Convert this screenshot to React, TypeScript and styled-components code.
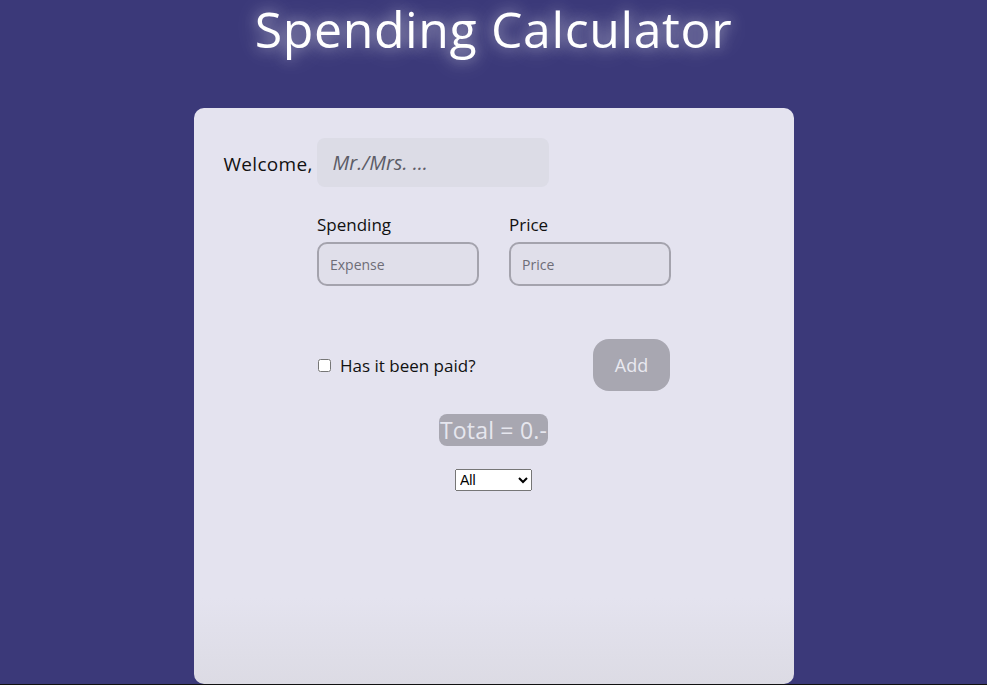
import React from "react";
import styled, { createGlobalStyle } from "styled-components";

const GlobalStyle = createGlobalStyle`
  html, body {
    margin: 0;
    padding: 0;
    background: #3b3979;
    font-family: "Open Sans", "Liberation Sans", sans-serif;
  }
  body {
    height: 685px;
    overflow: hidden;
    border-bottom: 1px solid #111;
    box-sizing: border-box;
  }
`;

const Title = styled.h1`
  margin: 0;
  height: 108px;
  text-align: center;
  color: #fff;
  font-size: 50px;
  font-weight: 500;
  letter-spacing: 0.6px;
  line-height: 58px;
  text-shadow: 0 0 14px rgba(255, 255, 255, 0.55), 0 0 28px rgba(255, 255, 255, 0.3);
`;

const Card = styled.main`
  width: 600px;
  height: 576px;
  margin: 0 auto;
  box-sizing: border-box;
  padding: 30px 30px 0;
  background: linear-gradient(#e4e3ef 85%, #dcdbe4);
  border-radius: 10px;
  display: flex;
  flex-direction: column;
  align-items: center;
`;

const WelcomeRow = styled.div`
  align-self: stretch;
  display: flex;
  align-items: center;
`;

const WelcomeLabel = styled.span`
  width: 93px;
  font-size: 19px;
  letter-spacing: 0.3px;
  color: #111;
  margin-top: 2px;
`;

const NameInput = styled.input`
  width: 232px;
  height: 49px;
  box-sizing: border-box;
  border: none;
  border-radius: 8px;
  background: #dcdce6;
  padding: 0 16px;
  font-family: inherit;
  font-size: 20px;
  font-style: italic;
  color: #555;
  &::placeholder {
    color: #5d5c66;
  }
`;

const Fields = styled.div`
  width: 353px;
  margin-top: 26px;
  display: grid;
  grid-template-columns: 162px 162px;
  column-gap: 30px;
`;

const Field = styled.label`
  display: flex;
  flex-direction: column;
  gap: 6px;
  font-size: 17px;
  color: #111;
`;

const TextInput = styled.input`
  width: 162px;
  height: 44px;
  box-sizing: border-box;
  border: 2px solid #a4a3ad;
  border-radius: 10px;
  background: #e0dfea;
  padding: 0 11px;
  font-family: inherit;
  font-size: 14px;
  &::placeholder {
    color: #6e6d77;
  }
`;

const ActionRow = styled.div`
  width: 353px;
  margin-top: 53px;
  display: flex;
  align-items: center;
  justify-content: space-between;
`;

const Paid = styled.label`
  display: flex;
  align-items: center;
  gap: 9px;
  font-size: 17px;
  color: #111;
`;

const Check = styled.input`
  width: 13px;
  height: 13px;
  margin: 0 0 0 1px;
`;

const AddButton = styled.button`
  width: 77px;
  height: 52px;
  border: none;
  border-radius: 16px;
  background: #a8a7b1;
  color: #e9e9f0;
  font-family: inherit;
  font-size: 18px;
`;

const Total = styled.div`
  margin-top: 23px;
  padding: 0 1px;
  height: 32px;
  line-height: 32px;
  border-radius: 8px;
  background: #a8a7b1;
  color: #e6e6ee;
  font-size: 23px;
  letter-spacing: 0.2px;
`;

const Filter = styled.select`
  margin-top: 23px;
  width: 77px;
  height: 22px;
  font-family: "Liberation Sans", sans-serif;
  font-size: 14px;
`;

export default function App() {
  return (
    <>
      <GlobalStyle />
      <Title>Spending Calculator</Title>
      <Card>
        <WelcomeRow>
          <WelcomeLabel>Welcome,</WelcomeLabel>
          <NameInput placeholder="Mr./Mrs. ..." />
        </WelcomeRow>
        <Fields>
          <Field>
            Spending
            <TextInput placeholder="Expense" />
          </Field>
          <Field>
            Price
            <TextInput placeholder="Price" />
          </Field>
        </Fields>
        <ActionRow>
          <Paid>
            <Check type="checkbox" />
            Has it been paid?
          </Paid>
          <AddButton>Add</AddButton>
        </ActionRow>
        <Total>Total = 0.-</Total>
        <Filter defaultValue="all">
          <option value="all">All</option>
          <option value="paid">Paid</option>
          <option value="unpaid">Unpaid</option>
        </Filter>
      </Card>
    </>
  );
}
